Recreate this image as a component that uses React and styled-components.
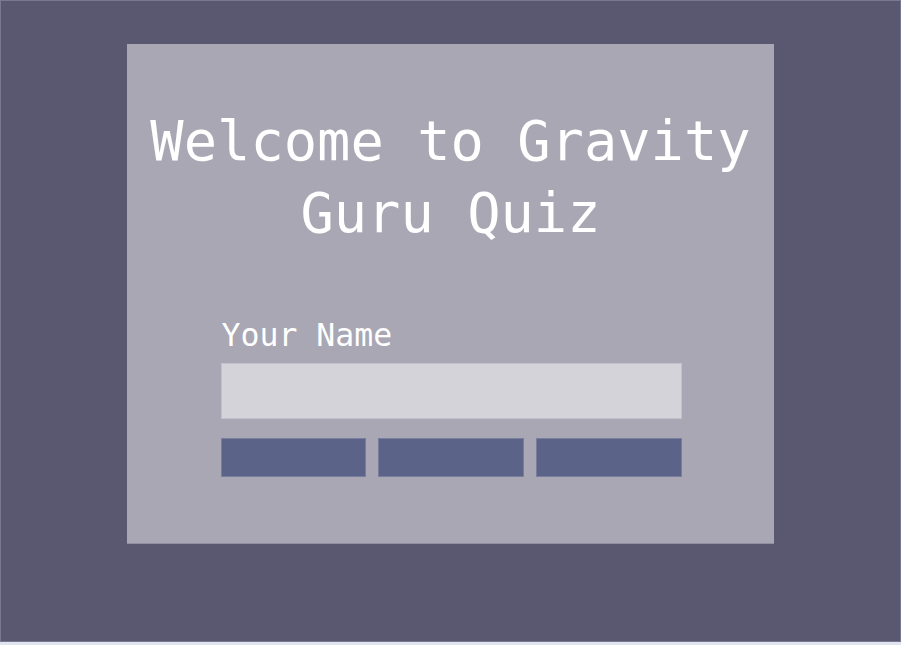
import React from "react";
import styled, { createGlobalStyle } from "styled-components";

const Global = createGlobalStyle`
  html, body { margin: 0; padding: 0; background: #e0e4ee; }
  * { box-sizing: border-box; }
`;

const Screen = styled.div`
  height: 642px;
  background: #5a5870;
  border: 1px solid #7a7890;
  padding-top: 43px;
  display: flex;
  flex-direction: column;
  align-items: center;
`;

const Card = styled.div`
  width: 647px;
  height: 500px;
  background: #a8a7b3;
  border-bottom: 1px solid #918fa2;
  padding-top: 62px;
  display: flex;
  flex-direction: column;
  align-items: center;
  font-family: "DejaVu Sans Mono", "Liberation Mono", monospace;
  color: #ffffff;
`;

const Title = styled.h1`
  margin: 0;
  font-size: 55.4px;
  font-weight: 400;
  line-height: 71.5px;
  text-align: center;
`;

const Form = styled.div`
  margin-top: 68px;
  width: 461px;
  margin-left: 1px;
  display: flex;
  flex-direction: column;
`;

const Label = styled.label`
  font-size: 31.5px;
  line-height: 37px;
  padding-left: 1px;
`;

const Input = styled.input`
  margin-top: 9px;
  height: 56px;
  width: 100%;
  background: #d4d3da;
  border: 1px solid #c2c1cc;
  outline: none;
  padding: 0 12px;
  font-family: inherit;
  font-size: 20px;
`;

const Buttons = styled.div`
  margin-top: 19px;
  display: grid;
  grid-template-columns: repeat(3, 1fr);
  gap: 12px;
`;

const Button = styled.button`
  height: 39px;
  background: #5b6389;
  border: 1px solid #7a7e9e;
  padding: 0;
  cursor: pointer;
`;

export default function App() {
  return (
    <>
      <Global />
      <Screen>
        <Card>
          <Title>
            Welcome to Gravity
            <br />
            Guru Quiz
          </Title>
          <Form>
            <Label htmlFor="name">Your Name</Label>
            <Input id="name" type="text" />
            <Buttons>
              <Button aria-label="Easy" />
              <Button aria-label="Medium" />
              <Button aria-label="Hard" />
            </Buttons>
          </Form>
        </Card>
      </Screen>
    </>
  );
}
